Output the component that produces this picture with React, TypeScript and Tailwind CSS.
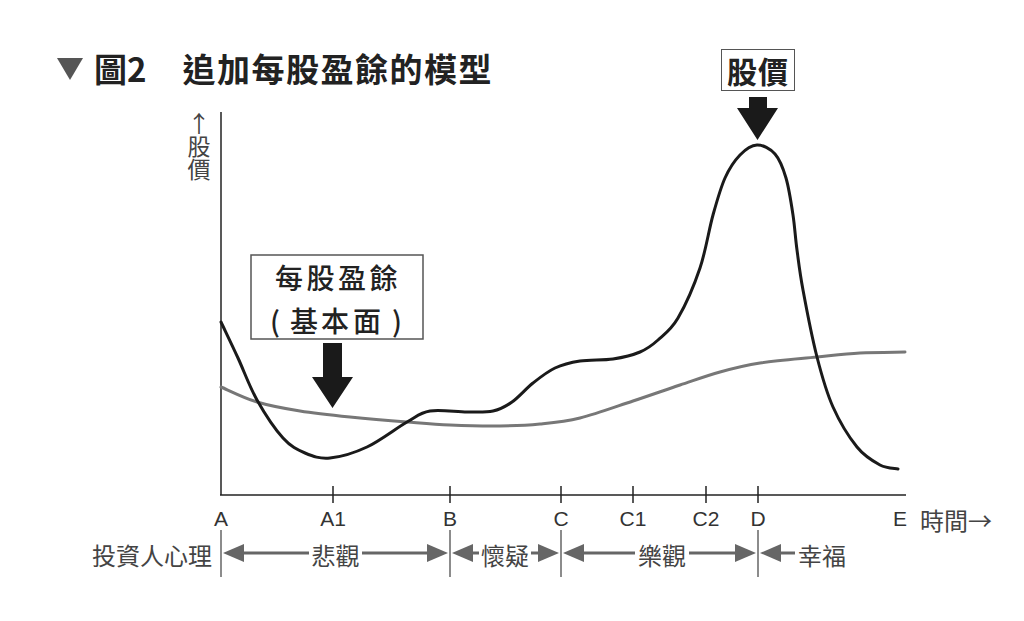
import React from 'react';

type Pt = [number, number];

// smooth path through the given points (catmull-rom -> cubic bezier)
function smooth(pts: Pt[]) {
  let d = `M${pts[0][0]},${pts[0][1]}`;
  for (let i = 0; i < pts.length - 1; i++) {
    const p0 = pts[i - 1] || pts[i];
    const p1 = pts[i];
    const p2 = pts[i + 1];
    const p3 = pts[i + 2] || p2;
    const c1x = p1[0] + (p2[0] - p0[0]) / 6;
    const c1y = p1[1] + (p2[1] - p0[1]) / 6;
    const c2x = p2[0] - (p3[0] - p1[0]) / 6;
    const c2y = p2[1] - (p3[1] - p1[1]) / 6;
    d += ` C${c1x.toFixed(1)},${c1y.toFixed(1)} ${c2x.toFixed(1)},${c2y.toFixed(1)} ${p2[0]},${p2[1]}`;
  }
  return d;
}

const pricePts: Pt[] = [
  [221, 322], [238, 358], [257, 400], [283, 438], [305, 453], [330, 458],
  [367, 447], [407, 422], [430, 411], [467, 412], [493, 411], [512, 402],
  [533, 383], [555, 368], [580, 361], [613, 359], [640, 352], [658, 340],
  [678, 318], [700, 268], [713, 215], [725, 178], [740, 155], [757, 145],
  [775, 154], [786, 178], [793, 215], [797, 250], [803, 290], [817, 357],
  [833, 407], [857, 447], [880, 465], [898, 469],
];

const epsPts: Pt[] = [
  [221, 387], [257, 402], [300, 411], [350, 417], [407, 422], [450, 425],
  [500, 426], [540, 424], [580, 418], [633, 401], [680, 385], [720, 372],
  [760, 363], [817, 357], [860, 353], [905, 352],
];

const ticks = [
  { x: 221, label: 'A', tick: false },
  { x: 333, label: 'A1', tick: true },
  { x: 450, label: 'B', tick: true },
  { x: 561, label: 'C', tick: true },
  { x: 633, label: 'C1', tick: true },
  { x: 706, label: 'C2', tick: true },
  { x: 758, label: 'D', tick: true },
  { x: 900, label: 'E', tick: false },
];

const phases = [
  { x1: 221, x2: 450, label: '悲觀', t1: 310, t2: 361, end: true },
  { x1: 450, x2: 561, label: '懷疑', t1: 480, t2: 530, end: true },
  { x1: 561, x2: 758, label: '樂觀', t1: 636, t2: 688, end: true },
  { x1: 758, x2: 0, label: '幸福', t1: 796, t2: 848, end: false },
];

const ROW = 553;
const GREY = '#666';

function Phase({ p }: { p: (typeof phases)[number] }) {
  return (
    <g>
      <polygon points={`${p.x1 + 2},${ROW} ${p.x1 + 23},${ROW - 9} ${p.x1 + 23},${ROW + 9}`} fill={GREY} />
      <line x1={p.x1 + 20} y1={ROW} x2={p.t1 - 1} y2={ROW} stroke={GREY} strokeWidth={3} />
      <text x={(p.t1 + p.t2) / 2} y={ROW + 1} textAnchor="middle" dominantBaseline="central" fontSize={24} fill="#444">
        {p.label}
      </text>
      {p.end && (
        <>
          <line x1={p.t2 + 1} y1={ROW} x2={p.x2 - 20} y2={ROW} stroke={GREY} strokeWidth={3} />
          <polygon points={`${p.x2 - 2},${ROW} ${p.x2 - 23},${ROW - 9} ${p.x2 - 23},${ROW + 9}`} fill={GREY} />
        </>
      )}
    </g>
  );
}

export default function App() {
  return (
    <div className="w-[1024px] h-[621px] bg-white flex flex-col overflow-hidden font-['Noto_Sans_CJK_TC','Liberation_Sans',sans-serif] text-[#222]">
      <div className="h-[96px] flex items-start pt-[49px]">
        <div className="ml-[57px] h-[38px] flex items-center">
          <svg width="26" height="22" viewBox="0 0 26 22" className="mt-[1px]">
            <polygon points="0,0 26,0 13,22" fill="#555" />
          </svg>
          <span className="ml-[11px] text-[33px] leading-none font-bold">圖2</span>
          <span className="ml-[36px] text-[33px] leading-none font-bold tracking-[1.5px]">追加每股盈餘的模型</span>
        </div>
        <div className="ml-auto mr-[229px] w-[74px] h-[42px] border-[1.5px] border-[#555] flex items-center justify-center">
          <span className="text-[30px] leading-none font-bold tracking-[1px]">股價</span>
        </div>
      </div>

      <svg width={1024} height={525} viewBox="0 96 1024 525" className="block">
        {/* price arrow */}
        <polygon points="749,97 767,97 767,108 778,108 757.5,140 737,108 749,108" fill="#1a1a1a" />

        {/* y axis label, set vertically */}
        <text
          x={199}
          y={112}
          fontSize={23}
          fill="#444"
          writingMode="vertical-rl"
          className="[text-orientation:upright]"
        >
          ↑股價
        </text>

        {/* axes */}
        <line x1={221} y1={112} x2={221} y2={495} stroke="#222" strokeWidth={1.5} />
        <line x1={220} y1={495} x2={906} y2={495} stroke="#222" strokeWidth={1.5} />
        {ticks.filter(t => t.tick).map(t => (
          <line key={t.label} x1={t.x} y1={486} x2={t.x} y2={503} stroke="#222" strokeWidth={1.5} />
        ))}

        {/* curves */}
        <path d={smooth(epsPts)} fill="none" stroke="#777" strokeWidth={3} strokeLinecap="round" />
        <path d={smooth(pricePts)} fill="none" stroke="#1a1a1a" strokeWidth={3} strokeLinecap="round" />

        {/* EPS callout */}
        <rect x={251} y={255} width={172} height={84} fill="white" stroke="#555" strokeWidth={1.5} />
        <g fontSize={28} fontWeight={500} fill="#222" textAnchor="middle" dominantBaseline="central">
          <text x={338} y={277} letterSpacing={3.5}>每股盈餘</text>
          <text x={275} y={320}>(</text>
          <text x={304} y={320}>基</text>
          <text x={335} y={320}>本</text>
          <text x={367} y={320}>面</text>
          <text x={397} y={320}>)</text>
        </g>
        <polygon points="323,343 342,343 342,377 353,377 332.5,408 312,377 323,377" fill="#1a1a1a" />

        {/* x labels */}
        <g fontSize={21} fill="#333" textAnchor="middle" dominantBaseline="central" fontFamily="'Liberation Sans', sans-serif">
          {ticks.map(t => (
            <text key={t.label} x={t.x} y={518}>{t.label}</text>
          ))}
        </g>
        <text x={920} y={519} fontSize={24} fill="#444" dominantBaseline="central">時間→</text>

        {/* investor psychology row */}
        <text x={212} y={ROW + 1} fontSize={24} fill="#444" textAnchor="end" dominantBaseline="central">投資人心理</text>
        {[221, 450, 561, 758].map(x => (
          <line key={x} x1={x} y1={530} x2={x} y2={577} stroke={GREY} strokeWidth={1.5} />
        ))}
        {phases.map(p => (
          <Phase key={p.label} p={p} />
        ))}
      </svg>
    </div>
  );
}
